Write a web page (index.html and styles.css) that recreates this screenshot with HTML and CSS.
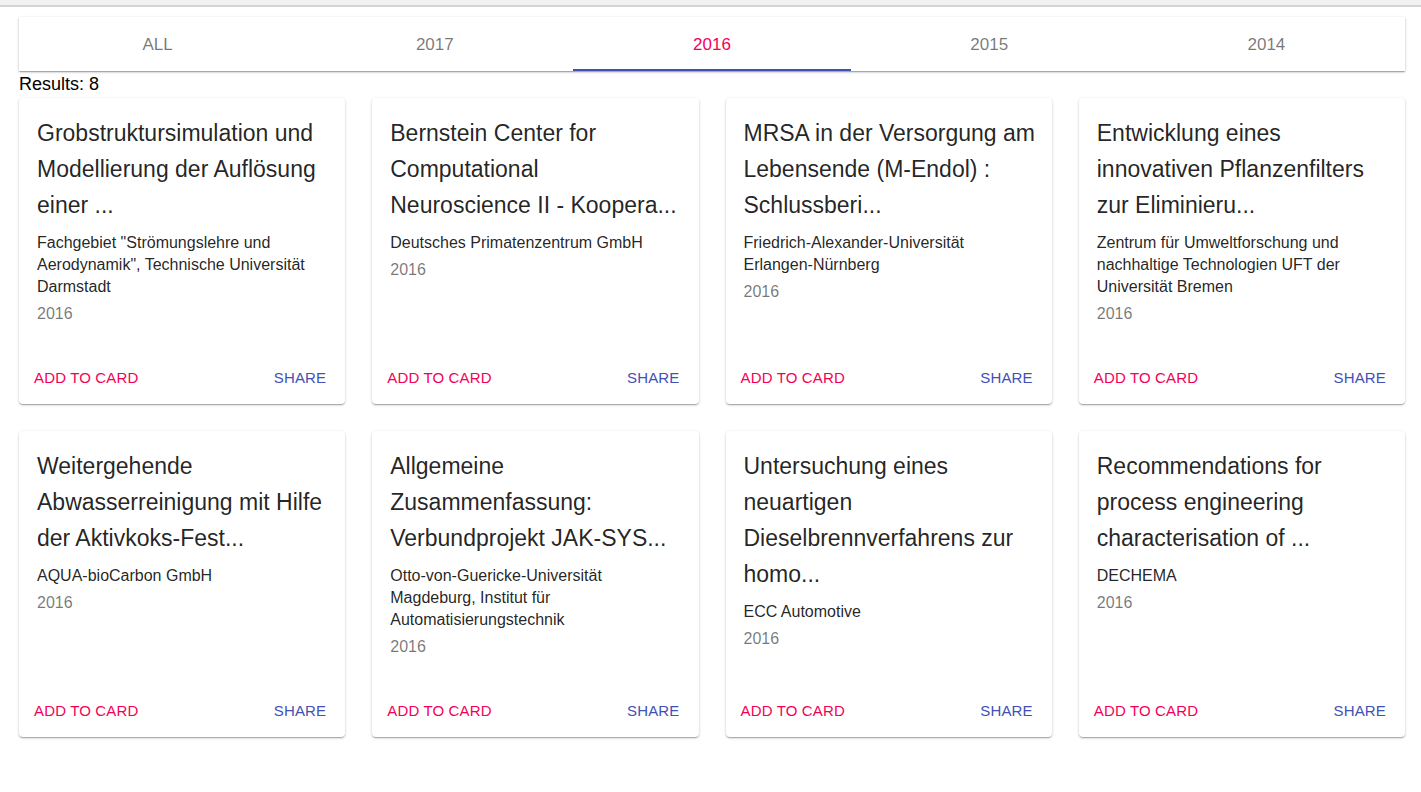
FILE: index.html
```html
<!DOCTYPE html>
<html>
<head>
<meta charset="utf-8">
<link rel="stylesheet" href="styles.css">
</head>
<body>
<div class="topbar"></div>
<div class="page">
  <nav class="tabs">
    <div class="tab">ALL</div>
    <div class="tab">2017</div>
    <div class="tab active">2016</div>
    <div class="tab">2015</div>
    <div class="tab">2014</div>
  </nav>
  <div class="results">Results: 8</div>
  <div class="grid">
    <div class="card">
      <div class="content">
        <h2 class="title">Grobstruktursimulation und Modellierung der Auflösung einer ...</h2>
        <p class="org">Fachgebiet "Strömungslehre und Aerodynamik", Technische Universität Darmstadt</p>
        <p class="year">2016</p>
      </div>
      <div class="actions"><span class="add">ADD TO CARD</span><span class="share">SHARE</span></div>
    </div>
    <div class="card">
      <div class="content">
        <h2 class="title">Bernstein Center for Computational Neuroscience II - Koopera...</h2>
        <p class="org">Deutsches Primatenzentrum GmbH</p>
        <p class="year">2016</p>
      </div>
      <div class="actions"><span class="add">ADD TO CARD</span><span class="share">SHARE</span></div>
    </div>
    <div class="card">
      <div class="content">
        <h2 class="title">MRSA in der Versorgung am Lebensende (M-Endol) : Schlussberi...</h2>
        <p class="org">Friedrich-Alexander-Universität Erlangen-Nürnberg</p>
        <p class="year">2016</p>
      </div>
      <div class="actions"><span class="add">ADD TO CARD</span><span class="share">SHARE</span></div>
    </div>
    <div class="card">
      <div class="content">
        <h2 class="title">Entwicklung eines innovativen Pflanzenfilters zur Eliminieru...</h2>
        <p class="org">Zentrum für Umweltforschung und nachhaltige Technologien UFT der Universität Bremen</p>
        <p class="year">2016</p>
      </div>
      <div class="actions"><span class="add">ADD TO CARD</span><span class="share">SHARE</span></div>
    </div>
    <div class="card">
      <div class="content">
        <h2 class="title">Weitergehende Abwasserreinigung mit Hilfe der Aktivkoks-Fest...</h2>
        <p class="org">AQUA-bioCarbon GmbH</p>
        <p class="year">2016</p>
      </div>
      <div class="actions"><span class="add">ADD TO CARD</span><span class="share">SHARE</span></div>
    </div>
    <div class="card">
      <div class="content">
        <h2 class="title">Allgemeine Zusammenfassung: Verbundprojekt JAK-SYS...</h2>
        <p class="org">Otto-von-Guericke-Universität Magdeburg, Institut für Automatisierungstechnik</p>
        <p class="year">2016</p>
      </div>
      <div class="actions"><span class="add">ADD TO CARD</span><span class="share">SHARE</span></div>
    </div>
    <div class="card">
      <div class="content">
        <h2 class="title">Untersuchung eines neuartigen Dieselbrennverfahrens zur homo...</h2>
        <p class="org">ECC Automotive</p>
        <p class="year">2016</p>
      </div>
      <div class="actions"><span class="add">ADD TO CARD</span><span class="share">SHARE</span></div>
    </div>
    <div class="card">
      <div class="content">
        <h2 class="title">Recommendations for process engineering characterisation of ...</h2>
        <p class="org">DECHEMA</p>
        <p class="year">2016</p>
      </div>
      <div class="actions"><span class="add">ADD TO CARD</span><span class="share">SHARE</span></div>
    </div>
  </div>
</div>
</body>
</html>
```
FILE: styles.css
```css
* { box-sizing: border-box; }
html, body {
  margin: 0;
  padding: 0;
  background: #fff;
  font-family: "Liberation Sans", Arial, sans-serif;
  color: rgba(0,0,0,0.87);
}
.topbar {
  height: 7px;
  background: #f1f1f1;
  border-bottom: 2px solid #d3d3d3;
}
.page {
  padding: 10px 16px 40px 19px;
}
.tabs {
  display: flex;
  height: 54px;
  background: #fff;
  box-shadow: 0 1px 3px rgba(0,0,0,0.2), 0 1px 1px rgba(0,0,0,0.14), 0 2px 1px -1px rgba(0,0,0,0.12);
}
.tab {
  flex: 1;
  display: flex;
  align-items: center;
  justify-content: center;
  font-size: 17px;
  color: rgba(0,0,0,0.54);
  border-bottom: 2px solid transparent;
  padding-top: 4px;
}
.tab.active {
  color: #f50057;
  border-bottom-color: #3f51b5;
}
.results {
  font-size: 18px;
  line-height: 20px;
  margin-top: 3px;
  color: #000;
}
.grid {
  margin-top: 4px;
  display: grid;
  grid-template-columns: repeat(4, 1fr);
  column-gap: 27px;
  row-gap: 27px;
}
.card {
  height: 306px;
  background: #fff;
  border-radius: 4px;
  box-shadow: 0 1px 3px rgba(0,0,0,0.2), 0 1px 1px rgba(0,0,0,0.14), 0 2px 1px -1px rgba(0,0,0,0.12);
  display: flex;
  flex-direction: column;
}
.content {
  flex: 1;
  padding: 17px 16px 0 18px;
}
.title {
  margin: 0 0 9px 0;
  font-size: 23px;
  font-weight: 400;
  line-height: 36px;
  color: rgba(0,0,0,0.87);
}
.org {
  margin: 0;
  font-size: 16px;
  line-height: 22px;
  color: rgba(0,0,0,0.87);
}
.year {
  margin: 5px 0 0 0;
  font-size: 16px;
  line-height: 22px;
  color: rgba(0,0,0,0.54);
}
.actions {
  display: flex;
  justify-content: space-between;
  align-items: center;
  padding: 0 19px 17px 15px;
  font-size: 15px;
  line-height: 18px;
  letter-spacing: 0.15px;
}
.add { color: #f50057; }
.share { color: #3f51b5; }
```
